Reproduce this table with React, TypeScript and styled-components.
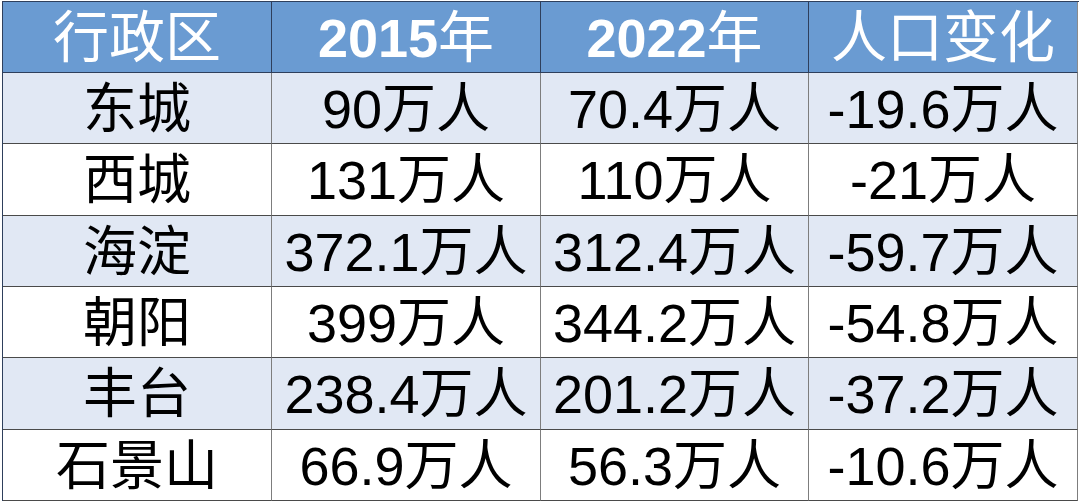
import React from 'react';
import styled, { createGlobalStyle } from 'styled-components';

const GlobalStyle = createGlobalStyle`
  html, body {
    margin: 0;
    padding: 0;
    background: #ffffff;
  }
`;

const headers = ['行政区', '2015年', '2022年', '人口变化'];

const rows = [
  ['东城', '90万人', '70.4万人', '-19.6万人'],
  ['西城', '131万人', '110万人', '-21万人'],
  ['海淀', '372.1万人', '312.4万人', '-59.7万人'],
  ['朝阳', '399万人', '344.2万人', '-54.8万人'],
  ['丰台', '238.4万人', '201.2万人', '-37.2万人'],
  ['石景山', '66.9万人', '56.3万人', '-10.6万人'],
];

// split digits from CJK so the numbers can be bold in the header
function renderHeader(text: string) {
  const m = text.match(/^([0-9.\-]+)(.*)$/);
  if (!m) return text;
  return (
    <>
      <Num>{m[1]}</Num>
      {m[2]}
    </>
  );
}

export default function App() {
  return (
    <>
      <GlobalStyle />
      <Page>
        <Grid>
          {headers.map((h, i) => (
            <HeadCell key={h} $last={i === headers.length - 1}>
              {renderHeader(h)}
            </HeadCell>
          ))}
          {rows.map((r, ri) =>
            r.map((c, ci) => (
              <Cell key={ri + '-' + ci} $striped={ri % 2 === 0}>
                {c}
              </Cell>
            ))
          )}
        </Grid>
      </Page>
    </>
  );
}

const Page = styled.div`
  padding: 1px 0 0 2px;
  width: 1080px;
  height: 504px;
  box-sizing: border-box;
`;

const Grid = styled.div`
  display: grid;
  grid-template-columns: 269px 269px 268px 269px;
  grid-template-rows: 71px repeat(6, 71.33px);
  width: 1076px;
  border-top: 1px solid #2e3f5c;
  border-left: 1px solid #2e3f5c;
  font-family: 'Liberation Sans', 'Noto Sans CJK SC', sans-serif;
`;

const HeadCell = styled.div<{ $last?: boolean }>`
  display: flex;
  align-items: center;
  justify-content: center;
  background: #6a9bd2;
  color: #ffffff;
  font-size: 56px;
  line-height: 1;
  border-right: 1px solid ${(p) => (p.$last ? '#8a8a8a' : '#2e3f5c')};
  border-bottom: 1px solid #2e3f5c;
  padding-top: 2px;
`;

const Num = styled.span`
  font-weight: bold;
  font-size: 54px;
`;

const Cell = styled.div<{ $striped?: boolean }>`
  display: flex;
  align-items: center;
  justify-content: center;
  background: ${(p) => (p.$striped ? '#e1e8f4' : '#ffffff')};
  color: #000000;
  font-size: 54px;
  line-height: 1;
  border-right: 1px solid #7d7d7d;
  border-bottom: 1px solid #4a4a4a;
  padding-top: 2px;
`;
